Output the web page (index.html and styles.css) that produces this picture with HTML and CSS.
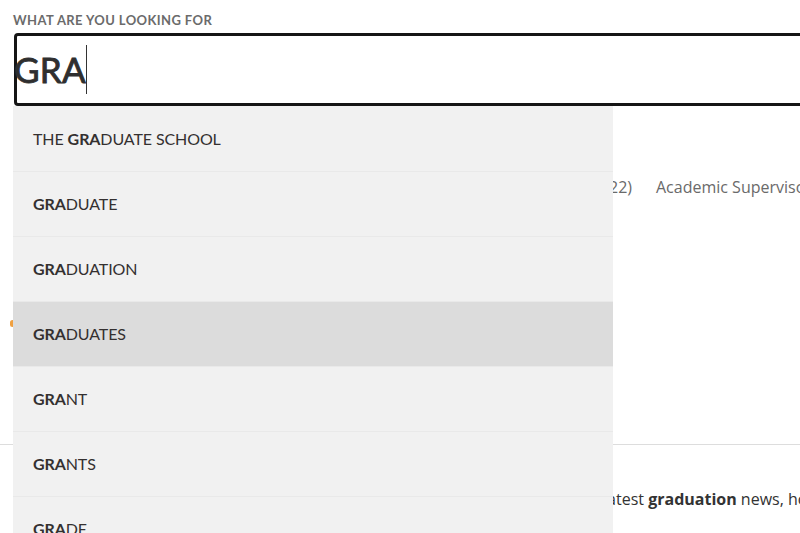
FILE: index.html
```html
<!DOCTYPE html>
<html>
<head>
<meta charset="utf-8">
<link rel="stylesheet" href="styles.css">
</head>
<body>
<div class="page">
  <div class="search">
    <div class="label">What are you looking for</div>
    <div class="field"><span class="query">GRA</span><span class="caret"></span></div>
    <ul class="suggest">
      <li>The <b>GRA</b>duate School</li>
      <li><b>GRA</b>duate</li>
      <li><b>GRA</b>duation</li>
      <li class="active"><b>GRA</b>duates</li>
      <li><b>GRA</b>nt</li>
      <li><b>GRA</b>nts</li>
      <li><b>GRA</b>de</li>
    </ul>
  </div>
  <div class="content">
    <div class="meta"><span class="meta-date">Postgraduate Research Handbook (2022)</span><span class="meta-tag">Academic Supervisors</span></div>
    <div class="dot"></div>
    <hr class="rule">
    <p class="intro"><span class="intro-lead">Find all the latest</span> <b>graduation</b> news, how to register and more.</p>
  </div>
</div>
</body>
</html>
```

FILE: styles.css
```css
html, body {
  margin: 0;
  padding: 0;
  background: #fff;
  overflow: hidden;
}
.page {
  position: relative;
  width: 800px;
  height: 533px;
  overflow: hidden;
  font-family: "Open Sans", sans-serif;
}
.search {
  padding: 12px 0 0 13px;
}
.label {
  font-family: Lato, sans-serif;
  font-weight: 700;
  font-size: 13px;
  line-height: 16px;
  text-transform: uppercase;
  color: #6b6b6b;
  margin-bottom: 5px;
  letter-spacing: 0.4px;
}
.field {
  box-sizing: border-box;
  height: 73px;
  width: 820px;
  margin-left: 1px;
  border: 3px solid #151515;
  border-radius: 4px 0 0 4px;
  display: flex;
  align-items: center;
  padding-left: 0;
}
.query {
  font-family: Lato, sans-serif;
  font-size: 35px;
  color: #2f2f2f;
  letter-spacing: 0.2px;
  line-height: 40px;
  margin-top: -2px;
  margin-left: -3px;
  -webkit-text-stroke: 0.9px #2f2f2f;
}
.caret {
  width: 1px;
  height: 49px;
  background: #333;
}
.suggest {
  position: absolute;
  top: 106px;
  left: 13px;
  width: 600px;
  margin: 0;
  padding: 0;
  list-style: none;
  background: #f1f1f1;
  z-index: 2;
}
.suggest li {
  box-sizing: border-box;
  height: 65px;
  line-height: 64px;
  border-bottom: 1px solid #e9e9e9;
  padding-left: 20px;
  font-family: Lato, sans-serif;
  font-size: 16px;
  text-transform: uppercase;
  color: #343030;
  white-space: nowrap;
  letter-spacing: -0.1px;
}
.suggest li:first-child {
  height: 66px;
  line-height: 65px;
}
.suggest li b {
  font-weight: 700;
}
.suggest li.active {
  background: #dcdcdc;
}
.content {
  position: relative;
}
.meta {
  margin-top: 69px;
  display: flex;
  align-items: center;
  gap: 24px;
  font-size: 16px;
  line-height: 24px;
  color: #6a6a6a;
  white-space: nowrap;
}
.meta-date {
  display: block;
  width: 632px;
  text-align: right;
  flex: none;
}
.dot {
  width: 5px;
  height: 7px;
  border-radius: 3px;
  background: #f0a040;
  margin: 121px 0 0 10px;
}
.rule {
  border: 0;
  border-top: 1px solid #dddddd;
  margin: 117px 0 0 0;
}
.intro {
  margin: 42px 0 0 0;
  font-size: 16px;
  line-height: 24px;
  color: #333;
  white-space: nowrap;
}
.intro-lead {
  display: inline-block;
  width: 644px;
  text-align: right;
}
.intro b {
  font-weight: 700;
}
```
